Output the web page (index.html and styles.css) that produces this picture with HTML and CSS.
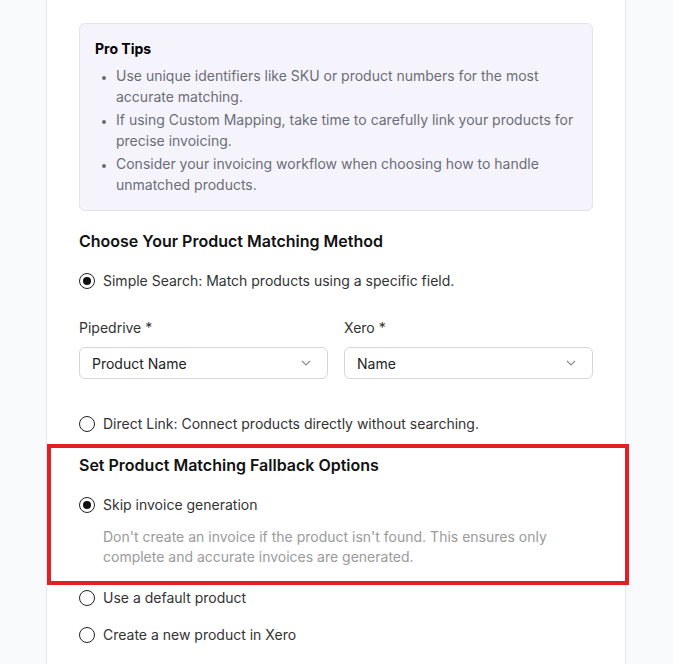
FILE: index.html
```html
<!DOCTYPE html>
<html lang="en">
<head>
    <meta charset="UTF-8">
    <meta name="viewport" content="width=device-width, initial-scale=1.0">
    <title>Product Matching</title>
    <link rel="stylesheet" href="styles.css">
</head>
<body>
    <div class="card">
        <div class="tips">
            <h4>Pro Tips</h4>
            <ul>
                <li>Use unique identifiers like SKU or product numbers for the most accurate matching.</li>
                <li>If using Custom Mapping, take time to carefully link your products for precise invoicing.</li>
                <li>Consider your invoicing workflow when choosing how to handle unmatched products.</li>
            </ul>
        </div>

        <h3 class="section-title">Choose Your Product Matching Method</h3>
        <label class="option first">
            <input type="radio" name="method" checked>
            <span>Simple Search: Match products using a specific field.</span>
        </label>

        <div class="fields">
            <div class="field">
                <div class="field-label">Pipedrive *</div>
                <div class="select">
                    <span>Product Name</span>
                    <svg width="10" height="6" viewBox="0 0 10 6"><path d="M1 1l4 4 4-4" fill="none" stroke="#8a8a8a" stroke-width="1.1"/></svg>
                </div>
            </div>
            <div class="field">
                <div class="field-label">Xero *</div>
                <div class="select">
                    <span>Name</span>
                    <svg width="10" height="6" viewBox="0 0 10 6"><path d="M1 1l4 4 4-4" fill="none" stroke="#8a8a8a" stroke-width="1.1"/></svg>
                </div>
            </div>
        </div>

        <label class="option direct">
            <input type="radio" name="method">
            <span>Direct Link: Connect products directly without searching.</span>
        </label>

        <div class="fallback">
            <h3 class="section-title">Set Product Matching Fallback Options</h3>
            <label class="option first">
                <input type="radio" name="fallback" checked>
                <span>Skip invoice generation</span>
            </label>
            <p class="desc">Don't create an invoice if the product isn't found. This ensures only complete and accurate invoices are generated.</p>
        </div>

        <label class="option after-desc">
            <input type="radio" name="fallback">
            <span>Use a default product</span>
        </label>
        <label class="option last">
            <input type="radio" name="fallback">
            <span>Create a new product in Xero</span>
        </label>
    </div>
</body>
</html>
```

FILE: styles.css
```css
body {
    margin: 0;
    background-color: #f9fafb;
    font-family: Inter, "Noto Sans", Arial, sans-serif;
    color: #2b2b2b;
}
.card {
    margin: 0 47px 0 46px;
    background: white;
    border: 1px solid #e6e7eb;
    border-top: none;
    padding: 23px 32px 40px;
}
.tips {
    background: #f5f4fd;
    border: 1px solid #e3e3ea;
    border-radius: 6px;
    padding: 15px 16px 15px 15px;
}
.tips h4 {
    margin: 0 0 6px;
    font-size: 14px;
    line-height: 20px;
    font-weight: 700;
    color: #000;
}
.tips ul {
    margin: 0;
    padding-left: 21px;
    color: #6b6d75;
    font-size: 14px;
    line-height: 21px;
}
.tips li + li {
    margin-top: 2px;
}
.tips li::marker {
    font-size: 11px;
}
.section-title {
    margin: 18px 0 0;
    font-size: 16px;
    line-height: 24px;
    font-weight: 600;
    color: #111;
}
.option {
    display: flex;
    align-items: center;
    gap: 8px;
    font-size: 14px;
    line-height: 20px;
    color: #333;
}
.option input {
    appearance: none;
    margin: 0;
    width: 16px;
    height: 16px;
    border: 1px solid #222;
    border-radius: 50%;
    display: grid;
    place-items: center;
}
.option input:checked::before {
    content: "";
    width: 8px;
    height: 8px;
    border-radius: 50%;
    background: #111;
}
.option.first {
    margin-top: 18px;
}
.option.direct {
    margin-top: 35px;
}
.option.after-desc {
    margin-top: 21px;
}
.option.last {
    margin-top: 17px;
}
.fields {
    display: grid;
    grid-template-columns: 1fr 1fr;
    gap: 16px;
    margin-top: 27px;
}
.field-label {
    font-size: 14px;
    line-height: 20px;
    color: #333;
    margin-bottom: 9px;
}
.select {
    height: 32px;
    box-sizing: border-box;
    border: 1px solid #d4d6db;
    border-radius: 6px;
    padding: 0 16px 0 12px;
    display: flex;
    align-items: center;
    justify-content: space-between;
    font-size: 14px;
    color: #222;
}
.fallback {
    position: relative;
    margin-top: 19px;
}
.fallback .section-title {
    margin-top: 0;
}
.fallback::after {
    content: "";
    position: absolute;
    top: -9px;
    left: -32px;
    right: -36px;
    bottom: -18px;
    border: 4px solid #e31e25;
}
.desc {
    margin: 12px 0 0 24px;
    font-size: 14px;
    line-height: 20px;
    color: #9a9a9a;
}
```
